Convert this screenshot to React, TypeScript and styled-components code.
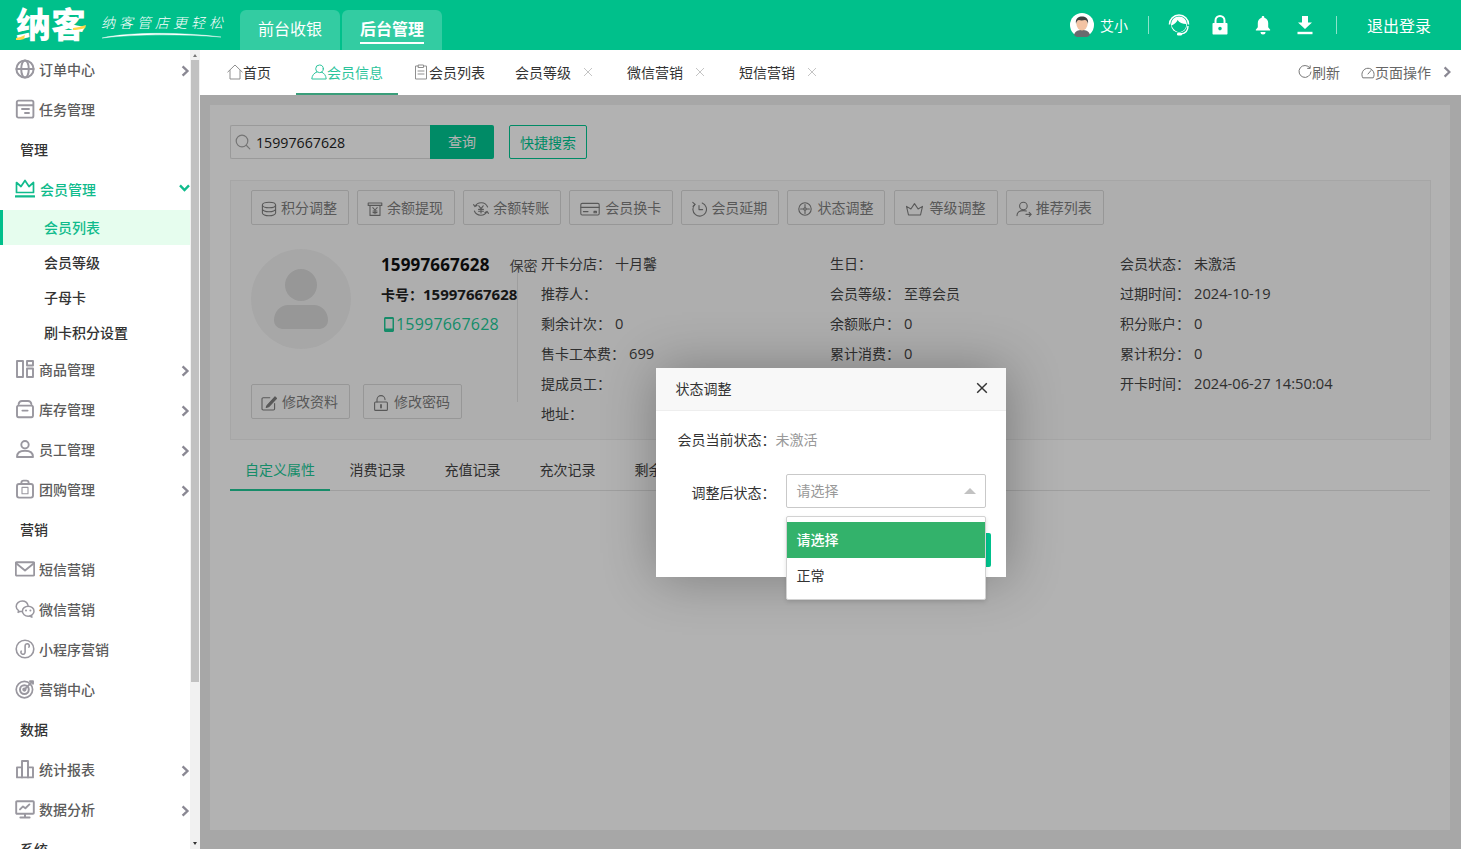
import React from "react";
import styled, { createGlobalStyle } from "styled-components";

const FONT = `"Open Sans", "Noto Sans CJK SC", "Noto Sans", sans-serif`;
const GREEN = "#00c08b";

const Global = createGlobalStyle`
  html, body { margin: 0; padding: 0; height: 100%; overflow: hidden; }
  body { font-family: ${FONT}; font-size: 14px; color: #333; background: #fff; }
  #root { height: 100%; }
  * { box-sizing: border-box; }
`;

const Shell = styled.div`display:flex;flex-direction:column;height:100vh;`;

/* ---------- top bar ---------- */
const TopBar = styled.header`
  flex:none;height:50px;background:${GREEN};display:flex;align-items:stretch;color:#fff;padding-left:16px;
`;
const Brand = styled.div`display:flex;align-items:center;width:224px;`;
const LogoMark = styled.div`
  position:relative;width:72px;font-size:35px;line-height:40px;font-weight:900;letter-spacing:0;color:#fff;white-space:nowrap;
  svg{position:absolute;left:0;top:0;}
`;
const Slogan = styled.div`margin-left:13px;display:flex;flex-direction:column;align-items:flex-start;margin-top:2px;`;
const SloganText = styled.span`
  font-size:14px;line-height:18px;letter-spacing:4px;font-weight:300;font-style:italic;white-space:nowrap;
`;
const ModeTabs = styled.nav`display:flex;gap:2px;align-items:flex-end;`;
const ModeTab = styled.a<{ $on?: boolean }>`
  width:100px;height:40px;border-radius:6px 6px 0 0;background:rgba(255,255,255,.2);
  display:flex;align-items:center;justify-content:center;font-size:16px;color:#fff;padding-bottom:2px;
  font-weight:${p => (p.$on ? 700 : 400)};
  span{position:relative;display:block;line-height:24px;}
  span::after{content:"";display:${p => (p.$on ? "block" : "none")};position:absolute;left:0;right:0;bottom:-3px;height:2px;background:#fff;}
`;
const TopRight = styled.div`margin-left:auto;display:flex;align-items:center;padding-right:30px;`;
const UserName = styled.span`font-size:14px;margin-left:6px;`;
const Sep = styled.i<{ $r?: number }>`display:block;width:1px;height:18px;background:rgba(255,255,255,.55);margin:0 ${p => p.$r ?? 20}px 0 20px;`;
const TopIcon = styled.span<{ $gap: number }>`display:flex;margin-right:${p => p.$gap}px;`;
const Logout = styled.span`font-size:16px;margin-left:10px;`;

/* ---------- sidebar ---------- */
const Body = styled.div`flex:1;display:flex;min-height:0;`;
const Sidebar = styled.aside`flex:none;width:200px;display:flex;background:#fff;`;
const SideScroll = styled.div`flex:none;width:190px;overflow:hidden;`;
const Rail = styled.div`flex:none;width:10px;background:#f1f1f1;display:flex;flex-direction:column;align-items:flex-start;`;
const RailThumb = styled.div`width:8px;height:622px;margin-left:1px;background:#c1c1c1;`;
const RailArrow = styled.i<{ $down?: boolean }>`
  display:block;width:0;height:0;margin:${p => (p.$down ? "auto 0 4px 3px" : "4px 0 3px 3px")};
  border-left:2.5px solid transparent;border-right:2.5px solid transparent;
  border-bottom:${p => (p.$down ? "none" : "3px solid #777")};
  border-top:${p => (p.$down ? "3px solid #333" : "none")};
`;
const NavRow = styled.div<{ $on?: boolean }>`
  height:40px;display:flex;align-items:center;padding:0 0 2px 15px;font-weight:500;
  color:${p => (p.$on ? "#10bb8c" : "#5c5c5c")};
  svg.lead{flex:none;width:20px;height:20px;margin-right:${p => (p.$on ? 5 : 4)}px;color:${p => (p.$on ? "#10bb8c" : "#99979f")};}
  svg.tail{margin-left:auto;flex:none;}
`;
const NavHead = styled.div`height:40px;line-height:40px;padding-left:20px;font-weight:500;color:#333;`;
const SubRow = styled.div<{ $on?: boolean }>`
  height:35px;line-height:35px;padding-left:44px;font-weight:500;
  color:${p => (p.$on ? "#10bb8c" : "#333")};
  background:${p => (p.$on ? "#e6fdee" : "transparent")};
  box-shadow:${p => (p.$on ? `inset 3px 0 0 ${GREEN}` : "none")};
`;

/* ---------- main ---------- */
const Main = styled.main`flex:1;min-width:0;display:flex;flex-direction:column;`;
const TabBar = styled.div`flex:none;height:45px;display:flex;align-items:stretch;padding-left:12px;background:#fff;`;
const PageTab = styled.div<{ $on?: boolean; $gap?: number }>`
  display:flex;align-items:center;padding:0 15px;height:45px;white-space:nowrap;font-size:14px;
  margin-right:${p => p.$gap || 0}px;
  color:${p => (p.$on ? "#2cc49c" : "#333")};
  border-bottom:2px solid ${p => (p.$on ? "#3a9e7a" : "transparent")};
  svg{flex:none;}
`;
const TabClose = styled.span`margin-left:10px;width:14px;margin-right:2px;display:flex;justify-content:center;`;
const TabTools = styled.div`margin-left:auto;display:flex;align-items:center;color:#666;padding-right:9px;padding-bottom:1px;`;
const Tool = styled.span`display:flex;align-items:center;margin-right:21px;&:last-of-type{margin-right:12px;}`;

const Content = styled.div`flex:1;position:relative;min-height:0;background:#f0f0f0;padding:10px 11px 19px 10px;`;
const Card = styled.section`height:100%;background:#fff;padding:20px 20px;`;
const SearchRow = styled.div`display:flex;align-items:stretch;height:34px;`;
const SearchBox = styled.div`
  width:200px;border:1px solid #ddd;border-right:none;border-radius:2px 0 0 2px;display:flex;align-items:center;padding-left:4px;
  color:#222;font-size:14.2px;gap:5px;
`;
const SearchBtn = styled.div`
  width:64px;background:#00c892;color:#fff;display:flex;align-items:center;justify-content:center;border-radius:0 2px 2px 0;padding-bottom:2px;
`;
const QuickBtn = styled.div`
  margin-left:15px;width:78px;border:1px solid #00c892;color:#00c892;border-radius:2px;display:flex;align-items:center;justify-content:center;
`;
const Panel = styled.div`margin:21px -1px 0 0;height:260px;border:1px solid #eee;background:#fafafa;padding:9px 20px 0;`;
const ActionRow = styled.div`display:flex;gap:8.1px;`;
const GhostBtn = styled.div<{ $roomy?: boolean }>`
  height:35px;border:1px solid #d9d9d9;border-radius:2px;display:flex;align-items:center;
  padding:0 11px 0 10px;gap:${p => (p.$roomy ? 6 : 5)}px;color:#7f7f7f;white-space:nowrap;background:#fafafa;
  svg{flex:none;color:#7f7f7f;margin:2px -1px 0;}
  span{position:relative;top:-1px;}
`;
const Profile = styled.div`display:flex;margin-top:24px;`;
const LeftCol = styled.div`
  position:relative;flex:none;width:290px;
  &::after{content:"";position:absolute;left:266px;top:23px;width:1px;height:130px;background:#e3e3e3;}
`;
const Identity = styled.div`display:flex;height:100px;`;
const AvatarCircle = styled.div`
  flex:none;width:100px;height:100px;border-radius:50%;background:#f0f0f0;display:flex;align-items:center;justify-content:center;
`;
const IdBlock = styled.div`margin-left:30px;white-space:nowrap;`;
const IdRow = styled.div`height:30px;display:flex;align-items:center;`;
const PhoneName = styled.b`font-size:17px;letter-spacing:.15px;color:#111;font-weight:700;`;
const Secret = styled.span`margin-left:20px;color:#555;position:relative;top:1px;`;
const CardNo = styled.b`font-size:14px;color:#222;font-weight:700;`;
const CardDigits = styled.span`font-size:15px;`;
const Phone = styled.span`font-size:16px;letter-spacing:.2px;color:#20c997;display:flex;align-items:center;gap:2px;padding-left:3px;`;
const LeftBtns = styled.div`display:flex;gap:13px;margin-top:35px;`;
const InfoGrid = styled.div`flex:1;margin-top:-1px;display:grid;grid-template-columns:289px 290px 1fr;grid-auto-rows:30px;align-items:center;`;
const InfoCell = styled.div`white-space:nowrap;color:#444;`;
const InfoVal = styled.span`margin-left:4px;font-size:14.7px;`;
const InfoText = styled.span`margin-left:4px;`;

const RecTabs = styled.div`margin-top:15px;height:36px;display:flex;border-bottom:1px solid #e4e4e4;`;
const RecTab = styled.div<{ $on?: boolean }>`
  height:36px;line-height:30px;padding:0 ${p => (p.$on ? "15px" : "19.5px")};white-space:nowrap;
  color:${p => (p.$on ? "#20c997" : "#444")};
  border-bottom:2px solid ${p => (p.$on ? "#20c997" : "transparent")};
`;

/* ---------- dialog ---------- */
const Scrim = styled.div`position:absolute;inset:0;background:rgba(0,0,0,.3);display:flex;align-items:center;justify-content:center;`;
const Dialog = styled.div`width:350px;background:#fff;box-shadow:1px 1px 50px rgba(0,0,0,.3);`;
const DialogHead = styled.div`
  height:43px;background:#f8f8f8;border-bottom:1px solid #eee;display:flex;align-items:center;justify-content:space-between;padding:0 18px 2px 20px;color:#333;
`;
const DialogBody = styled.div`padding:19px 15px 10px 22px;`;
const FormRow = styled.div<{ $top?: number }>`display:flex;align-items:flex-start;margin-top:${p => p.$top || 0}px;`;
const FormLabel = styled.label<{ $drop?: number }>`width:98px;flex:none;text-align:right;font-size:14px;line-height:20px;color:#333;white-space:nowrap;padding-top:${p => p.$drop || 0}px;`;
const Muted = styled.span`color:#999;line-height:20px;`;
const SelectWrap = styled.div`position:relative;margin-left:10px;width:200px;margin-top:-4px;`;
const SelectBox = styled.div`
  height:34px;border:1px solid #c9c9c9;border-radius:2px;display:flex;align-items:center;justify-content:space-between;padding:0 9px 2px 10px;color:#999;
`;
const Caret = styled.i`display:block;width:0;height:0;border:6px solid transparent;border-top:none;border-bottom:6px solid #c2c2c2;margin-top:3px;`;
const Options = styled.div`
  position:absolute;left:0;top:42px;width:200px;background:#fff;border:1px solid #d2d2d2;border-radius:2px;padding:5px 0;box-shadow:0 2px 4px rgba(0,0,0,.12);z-index:2;
`;
const Option = styled.div<{ $on?: boolean }>`
  height:36px;line-height:36px;padding-left:10px;
  background:${p => (p.$on ? "#33b26b" : "#fff")};
  color:${p => (p.$on ? "#fff" : "#333")};
  font-weight:${p => (p.$on ? 500 : 400)};
`;
const DialogFoot = styled.div`display:flex;justify-content:flex-end;margin-top:25px;`;
const Submit = styled.div`width:100px;height:34px;border-radius:2px;background:${GREEN};color:#fff;display:flex;align-items:center;justify-content:center;`;

/* ---------- icons ---------- */
type P = { children: React.ReactNode; s?: number; w?: number; c?: string; cls?: string; sw?: number; vb?: string };
const Ic = ({ children, s = 20, w, c = "currentColor", cls, sw = 1.6, vb = "0 0 20 20" }: P) => (
  <svg className={cls} width={w || s} height={s} viewBox={vb} fill="none" stroke={c} strokeWidth={sw} strokeLinecap="round" strokeLinejoin="round">{children}</svg>
);
const L = (ch: React.ReactNode, sw = 1.9) => <Ic cls="lead" sw={sw}>{ch}</Ic>;

const navIcons = {
  globe: L(<><circle cx="10" cy="10" r="8.6" /><ellipse cx="10" cy="10" rx="3.8" ry="8.6" /><path d="M1.5 10h17" /></>, 2),
  task: L(<><rect x="1.8" y="1.6" width="16.6" height="17" rx="1.6" /><path d="M2 6.3h16M7 10h7M10 14h4" /></>),
  crown: L(<><path d="M1.5 13.500V3.500l4.500 4L10 1.500l4 6 4.500-4v10z" /><path d="M.5 17.400h19" strokeWidth="2.200" /></>, 1.7),
  goods: L(<><rect x="2" y="2" width="6" height="16" /><rect x="12" y="2" width="6" height="4.5" /><rect x="12" y="9.5" width="6" height="8.5" /></>),
  store: L(<><path d="M3.6 5.2C4 3 5 2 7 2h6c2 0 3 1 3.4 3.2" /><rect x="2" y="6.6" width="16" height="11.6" rx="1.6" /><path d="M7.4 11.6h5.2" /></>),
  staff: L(<><circle cx="10" cy="5.7" r="3.7" /><path d="M2 18c0-4.4 3-6.2 8-6.2s8 1.8 8 6.2z" /></>),
  group: L(<><path d="M6.4 5V3.6C6.4 2.4 7.4 1.6 8.6 1.6h2.8c1.2 0 2.2.8 2.2 2V5" /><rect x="2" y="5" width="16" height="13.6" rx="2" /><rect x="7" y="8.4" width="6" height="6.4" strokeWidth="1.1" /></>),
  mail: L(<><rect x=".8" y="3.2" width="18.4" height="13.4" rx="1" /><path d="M1.4 4.4 10 11.4l8.6-7" /></>),
  wechat: L(<><path d="M13 6.4C12.4 3.8 10 2 7.3 2 4 2 1.2 4.4 1.2 7.4c0 1.7.9 3.2 2.4 4.2l-.5 1.8 2.2-1c.5.1.9.2 1.4.2" /><ellipse cx="13.2" cy="12.2" rx="5.8" ry="5" /><path d="m16.3 16.2.6 2-2.2-1.2" /><path d="M11 11.4h.01M15.4 11.4h.01" strokeWidth="2" /></>, 1.5),
  mini: L(<><circle cx="10" cy="10" r="8.8" /><path d="M6 12.2a2.1 2.1 0 1 0 3.9 1V7a2.1 2.1 0 1 1 3.8 1.2" transform="translate(.2 -.1)" /></>, 1.6),
  target: L(<><circle cx="9.4" cy="10.6" r="8.2" strokeWidth="1.7" /><circle cx="9.4" cy="10.6" r="4.4" strokeWidth="2" /><circle cx="9.4" cy="10.6" r="1.2" /><path d="M9.8 10.2 17.6 2.4M15 2.2h3v2.6" /></>),
  chart: L(<><rect x="2" y="8.4" width="5" height="10" /><rect x="7" y="2" width="6" height="16.4" /><rect x="13" y="8.4" width="5" height="10" /></>),
  monitor: L(<><rect x="1.2" y="2.2" width="17.6" height="12.6" rx=".8" /><path d="M10 15v3M5.4 18.6h9.2" strokeWidth="2" /><path d="m5 10.4 3-3 2.4 1.8 4-3.8" /></>),
};

const Chev = ({ c = "#8a8893" }: { c?: string }) => (
  <svg className="tail" width="9" height="12" viewBox="0 0 9 12" fill="none" stroke={c} strokeWidth="2.4" style={{ marginTop: 3 }}>
    <path d="M1.6 1.4 6.4 6 1.6 10.6" />
  </svg>
);
const ChevDown = () => (
  <svg className="tail" width="11" height="8" viewBox="0 0 11 8" fill="none" stroke="#10bb8c" strokeWidth="2.4" style={{ marginTop: -2 }}>
    <path d="M1 1.4 5.5 6 10 1.4" />
  </svg>
);
const X = ({ s = 10, c = "#c4c4c4", sw = 1 }: { s?: number; c?: string; sw?: number }) => (
  <svg width={s} height={s} viewBox="0 0 10 10" fill="none" stroke={c} strokeWidth={sw}><path d="M1 1l8 8M9 1l-8 8" /></svg>
);

const B = (ch: React.ReactNode, w = 16) => <Ic s={16} w={w} vb={`0 0 ${w} 16`} sw={1.1}>{ch}</Ic>;
const btnIcons = {
  db: B(<><ellipse cx="8" cy="4" rx="6.6" ry="2.8" /><path d="M1.4 4v8c0 1.5 3 2.8 6.6 2.8s6.6-1.3 6.6-2.8V4M1.4 8c0 1.5 3 2.8 6.6 2.8s6.6-1.3 6.6-2.8" /></>),
  bag: B(<><path d="M1.2 2h13.6v2.4H1.2zM3 4.4V14.4h10V4.4M5.8 6.6 8 9l2.2-2.4M8 9v3.6M6 10h4M6 11.6h4" /></>),
  yen: B(<><path d="M2 5.4A7 7 0 0 1 14.6 6M14 10.6A7 7 0 0 1 1.4 10M.6 3.6 2 5.6l2-1M15.4 12.4 14 10.4l-2 1" /><path d="M5.8 4.8 8 7.6l2.2-2.8M8 7.6V12M5.6 8.4h4.8M5.6 10.2h4.8" /></>),
  cardI: B(<g transform="translate(1 0)"><rect x=".8" y="2.4" width="18.4" height="11.6" rx="1.4" /><path d="M1 6.4h18M3.4 10.6H8M14 10.4h2.4v1.4H14z" /></g>, 22),
  clock: B(<><path d="M11.2 2A6.8 6.8 0 1 1 4 3.4" /><path d="M8 4.600V8.600h3.600M1.800 1.400 4 3.400 2 5.400" /></>),
  status: B(<><circle cx="8" cy="8" r="6.200" /><path d="M8 3.600v8.800M3.600 8h8.800" /><circle cx="8" cy="8" r="1.200" fill="#fafafa" /></>),
  crown: B(<g transform="translate(1.500 0)"><path d="M1 5.400 5.400 8 9 2.600 12.600 8 17 5.400 15 14H3z" /></g>, 22),
  refer: B(<><circle cx="7.400" cy="5" r="3.800" /><path d="M1 14.600c0-3.400 2.200-5 6.400-5 1.200 0 2.200.1 3 .4M10 13.400h5M13.200 11.400l2 2-2 2" /></>),
  edit: B(<><path d="M13.600 8.600v5.200c0 .7-.5 1.200-1.200 1.200H2.200c-.7 0-1.200-.5-1.200-1.200V4c0-.7.5-1.200 1.200-1.200h6.600" /><path d="M6 10.600 14 1.800l1.600 1.600-8 8.400-2.400.6z" fill="#7f7f7f" /></>),
  unlock: B(<><path d="M4 7V4.600a4 4 0 0 1 8 0" /><rect x="1.600" y="7" width="12.800" height="8.400" rx="1" /><path d="M8 10v2.600" strokeWidth="1.800" /></>),
};

const Avatar = () => (
  <svg width="24" height="24" viewBox="0 0 24 24">
    <circle cx="12" cy="12" r="12" fill="#fff" />
    <path d="M4 22c1-4 4-5 8-5s7 1 8 5a12 12 0 0 1-16 0z" fill="#6a6a6e" />
    <ellipse cx="12" cy="11" rx="5.600" ry="6.400" fill="#f3c3a4" />
    <path d="M6 11C5 5 9 3.600 12 3.600s7 1.400 6 7.400c-.6-3-1.600-4-3-4-2 .6-5 .6-6 0-1.400 0-2.400 1-3 4z" fill="#3f3f3f" />
  </svg>
);
const Headset = () => (
  <svg width="22" height="24" viewBox="0 0 22 24" fill="none">
    <circle cx="11" cy="11.500" r="8" fill="#fff" />
    <path d="M3.600 12.500c2.500-1 5-3 6-5.500 1.500 2.500 5 4 8.500 4v2c-.5 3.500-3.500 6-7 6-3 0-6-2.500-7.500-6.500z" fill={GREEN} />
    <path d="M1.500 11.500a9.500 9.500 0 0 1 19 0" stroke="#fff" strokeWidth="1.600" />
    <path d="M20 13c0 5-3 7.500-7 8" stroke="#fff" strokeWidth="1.400" />
    <rect x="9" y="19.800" width="5" height="2.600" rx="1.200" fill="#fff" />
  </svg>
);
const Lock = () => (
  <svg width="16" height="20" viewBox="0 0 16 20" fill="none">
    <path d="M3.500 9V5.500a4.500 4.500 0 0 1 9 0V9" stroke="#fff" strokeWidth="2" />
    <path fillRule="evenodd" clipRule="evenodd" d="M1.500 8h13c.6 0 1 .4 1 1v9.500c0 .6-.4 1-1 1h-13c-.6 0-1-.4-1-1V9c0-.6.4-1 1-1zM8 11.800a1.800 1.800 0 1 0 0 3.600 1.800 1.800 0 0 0 0-3.600z" fill="#fff" />
  </svg>
);
const Bell = () => (
  <svg width="16" height="19" viewBox="0 0 16 19" fill="#fff">
    <path d="M8 0c.8 0 1.300.5 1.300 1.300v.5c2.500.6 3.900 2.700 3.900 5.200v4.200l1.800 2.300c.4.500.2 1-.4 1H1.400c-.6 0-.8-.5-.4-1l1.800-2.300V7c0-2.500 1.400-4.600 3.900-5.200v-.5C6.700.5 7.200 0 8 0z" />
    <path d="M5.500 16h5a2.500 2.500 0 0 1-5 0z" />
  </svg>
);
const Download = () => (
  <svg width="16" height="19" viewBox="0 0 16 19" fill="#fff">
    <path d="M5 0h6v6.500h4L8 13 1 6.500h4z" />
    <rect x="0.500" y="15.800" width="15" height="2.400" />
  </svg>
);

const grey = "#8f8f8f";

export default function App() {
  return (
    <Shell>
      <Global />
      <TopBar>
        <Brand>
          <LogoMark>
            纳客
            <svg width="72" height="40" viewBox="0 0 72 40" fill="#ffd84a" stroke="none">
              <path d="M0 33c3-.5 6-1.500 9-3l-1 4c-3 .8-6 1.200-8 1z" />
              <path d="M57 23c4-.5 8-1.500 13-3l-1 3c-4 1.500-9 2-12 2z" />
            </svg>
          </LogoMark>
          <Slogan>
            <SloganText>纳客管店更轻松</SloganText>
            <svg width="122" height="7" viewBox="0 0 122 7" fill="none">
              <path d="M1 6C25 .5 75-.5 120 5C80 2 35 2 1 6z" fill="#fff" stroke="#fff" strokeWidth=".4" />
            </svg>
          </Slogan>
        </Brand>
        <ModeTabs>
          <ModeTab><span>前台收银</span></ModeTab>
          <ModeTab $on><span>后台管理</span></ModeTab>
        </ModeTabs>
        <TopRight>
          <Avatar />
          <UserName>艾小</UserName>
          <Sep $r={19} />
          <TopIcon $gap={22}><Headset /></TopIcon>
          <TopIcon $gap={27}><Lock /></TopIcon>
          <TopIcon $gap={26}><Bell /></TopIcon>
          <TopIcon $gap={3}><Download /></TopIcon>
          <Sep />
          <Logout>退出登录</Logout>
        </TopRight>
      </TopBar>
      <Body>
        <Sidebar>
          <SideScroll>
            <NavRow>{navIcons.globe}订单中心<Chev /></NavRow>
            <NavRow>{navIcons.task}任务管理</NavRow>
            <NavHead>管理</NavHead>
            <NavRow $on>{navIcons.crown}会员管理<ChevDown /></NavRow>
            <SubRow $on>会员列表</SubRow>
            <SubRow>会员等级</SubRow>
            <SubRow>子母卡</SubRow>
            <SubRow>刷卡积分设置</SubRow>
            <NavRow>{navIcons.goods}商品管理<Chev /></NavRow>
            <NavRow>{navIcons.store}库存管理<Chev /></NavRow>
            <NavRow>{navIcons.staff}员工管理<Chev /></NavRow>
            <NavRow>{navIcons.group}团购管理<Chev /></NavRow>
            <NavHead>营销</NavHead>
            <NavRow>{navIcons.mail}短信营销</NavRow>
            <NavRow>{navIcons.wechat}微信营销</NavRow>
            <NavRow>{navIcons.mini}小程序营销</NavRow>
            <NavRow>{navIcons.target}营销中心</NavRow>
            <NavHead>数据</NavHead>
            <NavRow>{navIcons.chart}统计报表<Chev /></NavRow>
            <NavRow>{navIcons.monitor}数据分析<Chev /></NavRow>
            <NavHead>系统</NavHead>
          </SideScroll>
          <Rail>
            <RailArrow />
            <RailThumb />
            <RailArrow $down />
          </Rail>
        </Sidebar>
        <Main>
          <TabBar>
            <PageTab $gap={10}>
              <Ic s={16} sw={1} vb="0 0 16 16" c={grey}><path d="M.8 8 8 1l7.200 7M3 6.500V15h10V6.500" /></Ic>首页
            </PageTab>
            <PageTab $on>
              <Ic s={16} sw={1} vb="0 0 16 16" c="#2cc49c"><circle cx="8.500" cy="4.800" r="3.800" /><path d="M5.800 8C3 9 1 11.500 .8 15h14.400c-.2-3.500-2-6-4.800-7" /></Ic>会员信息
            </PageTab>
            <PageTab>
              <Ic s={16} sw={1} vb="0 0 16 16" c={grey}><path d="M5.500 2H2.500v13h11V2h-3M5.500 1h5v2.500h-5zM5 7h6M5 10h6" /></Ic>会员列表
            </PageTab>
            <PageTab>会员等级<TabClose><X /></TabClose></PageTab>
            <PageTab>微信营销<TabClose><X /></TabClose></PageTab>
            <PageTab>短信营销<TabClose><X /></TabClose></PageTab>
            <TabTools>
              <Tool>
                <Ic s={14} sw={1} vb="0 0 14 14" c="#777"><path d="M11.800 2.800A6 6 0 1 0 13 7M12.200.8v2.600H9.600" /></Ic>刷新
              </Tool>
              <Tool>
                <Ic s={14} sw={1} vb="0 0 14 14" c="#777"><path d="M1.600 12.500A6.200 6.200 0 1 1 12.400 12.500zM7 9l3-3.500" /></Ic>页面操作
              </Tool>
              <svg width="9" height="12" viewBox="0 0 9 12" fill="none" stroke="#8a8893" strokeWidth="2.200"><path d="M1.600 1.400 6.400 6 1.600 10.600" /></svg>
            </TabTools>
          </TabBar>
          <Content>
            <Card>
              <SearchRow>
                <SearchBox>
                  <Ic s={16} sw={1.200} vb="0 0 16 16" c="#a8a8a8"><circle cx="7" cy="7" r="5.800" /><path d="m11.500 11.500 3.300 3.300" /></Ic>
                  15997667628
                </SearchBox>
                <SearchBtn>查询</SearchBtn>
                <QuickBtn>快捷搜索</QuickBtn>
              </SearchRow>
              <Panel>
                <ActionRow>
                  <GhostBtn>{btnIcons.db}<span>积分调整</span></GhostBtn>
                  <GhostBtn>{btnIcons.bag}<span>余额提现</span></GhostBtn>
                  <GhostBtn>{btnIcons.yen}<span>余额转账</span></GhostBtn>
                  <GhostBtn>{btnIcons.cardI}<span>会员换卡</span></GhostBtn>
                  <GhostBtn>{btnIcons.clock}<span>会员延期</span></GhostBtn>
                  <GhostBtn>{btnIcons.status}<span>状态调整</span></GhostBtn>
                  <GhostBtn>{btnIcons.crown}<span>等级调整</span></GhostBtn>
                  <GhostBtn>{btnIcons.refer}<span>推荐列表</span></GhostBtn>
                </ActionRow>
                <Profile>
                  <LeftCol>
                    <Identity>
                      <AvatarCircle>
                        <svg width="54" height="60" viewBox="0 0 54 60" fill="#d8d8d8">
                          <circle cx="27" cy="16" r="16" />
                          <path d="M14 36h26c8 0 14 7 14 15 0 5-3 8-8 9H8c-5-1-8-4-8-9 0-8 6-15 14-15z" />
                        </svg>
                      </AvatarCircle>
                      <IdBlock>
                        <IdRow><PhoneName>15997667628</PhoneName><Secret>保密</Secret></IdRow>
                        <IdRow><CardNo>卡号：<CardDigits>15997667628</CardDigits></CardNo></IdRow>
                        <IdRow>
                          <Phone>
                            <svg width="10" height="15" viewBox="0 0 10 15" fill="#20c997">
                              <path fillRule="evenodd" d="M1.500 0h7C9.300 0 10 .7 10 1.500v12c0 .8-.7 1.500-1.500 1.500h-7C.7 15 0 14.300 0 13.500v-12C0 .7.700 0 1.500 0zM1.500 2v9.500h7V2z" />
                            </svg>
                            15997667628
                          </Phone>
                        </IdRow>
                      </IdBlock>
                    </Identity>
                    <LeftBtns>
                      <GhostBtn $roomy>{btnIcons.edit}<span>修改资料</span></GhostBtn>
                      <GhostBtn $roomy>{btnIcons.unlock}<span>修改密码</span></GhostBtn>
                    </LeftBtns>
                  </LeftCol>
                  <InfoGrid>
                    <InfoCell>开卡分店：<InfoText>十月馨</InfoText></InfoCell>
                    <InfoCell>生日：</InfoCell>
                    <InfoCell>会员状态：<InfoText>未激活</InfoText></InfoCell>
                    <InfoCell>推荐人：</InfoCell>
                    <InfoCell>会员等级：<InfoText>至尊会员</InfoText></InfoCell>
                    <InfoCell>过期时间：<InfoVal>2024-10-19</InfoVal></InfoCell>
                    <InfoCell>剩余计次：<InfoVal>0</InfoVal></InfoCell>
                    <InfoCell>余额账户：<InfoVal>0</InfoVal></InfoCell>
                    <InfoCell>积分账户：<InfoVal>0</InfoVal></InfoCell>
                    <InfoCell>售卡工本费：<InfoVal>699</InfoVal></InfoCell>
                    <InfoCell>累计消费：<InfoVal>0</InfoVal></InfoCell>
                    <InfoCell>累计积分：<InfoVal>0</InfoVal></InfoCell>
                    <InfoCell>提成员工：</InfoCell>
                    <InfoCell />
                    <InfoCell>开卡时间：<InfoVal>2024-06-27 14:50:04</InfoVal></InfoCell>
                    <InfoCell>地址：</InfoCell>
                  </InfoGrid>
                </Profile>
              </Panel>
              <RecTabs>
                <RecTab $on>自定义属性</RecTab>
                <RecTab>消费记录</RecTab>
                <RecTab>充值记录</RecTab>
                <RecTab>充次记录</RecTab>
                <RecTab>剩余计次</RecTab>
              </RecTabs>
            </Card>
            <Scrim>
              <Dialog>
                <DialogHead>状态调整<X s={12} c="#333" sw={1.200} /></DialogHead>
                <DialogBody>
                  <FormRow>
                    <FormLabel>会员当前状态：</FormLabel>
                    <Muted>未激活</Muted>
                  </FormRow>
                  <FormRow $top={28}>
                    <FormLabel $drop={5}>调整后状态：</FormLabel>
                    <SelectWrap>
                      <SelectBox>请选择<Caret /></SelectBox>
                      <Options>
                        <Option $on>请选择</Option>
                        <Option>正常</Option>
                      </Options>
                    </SelectWrap>
                  </FormRow>
                  <DialogFoot><Submit>确定</Submit></DialogFoot>
                </DialogBody>
              </Dialog>
            </Scrim>
          </Content>
        </Main>
      </Body>
    </Shell>
  );
}
